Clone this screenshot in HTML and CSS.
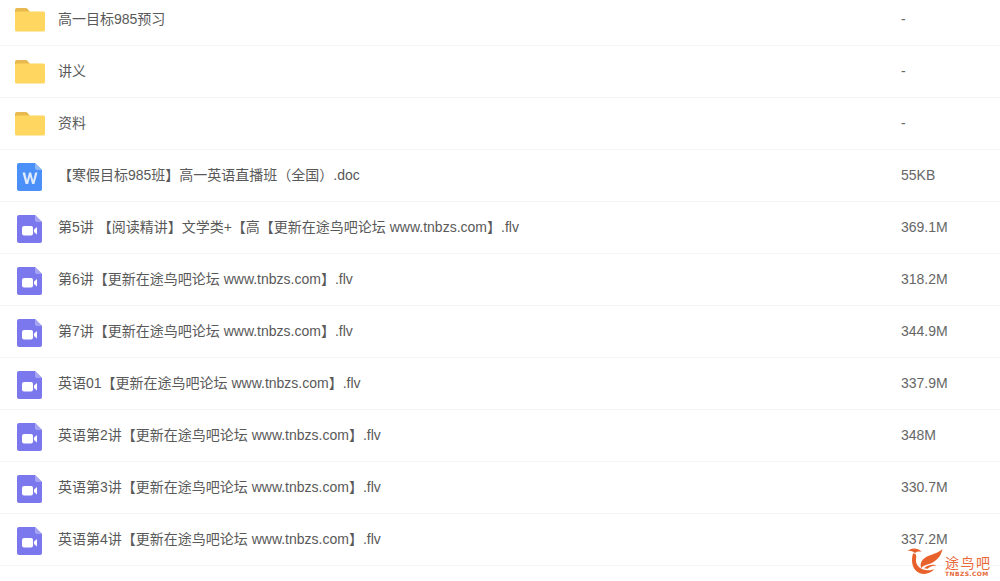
FILE: index.html
```html
<!DOCTYPE html>
<html lang="zh-CN">
<head>
  <meta charset="UTF-8">
  <title>文件列表</title>
  <link rel="stylesheet" href="styles.css">
</head>
<body>
  <svg class="defs" width="0" height="0">
    <defs>
      <symbol id="folder" viewBox="0 0 30 25">
        <path d="M0 3a2 2 0 0 1 2-2h8.500a3 3 0 0 1 2.200 1L15 5H2L0 7z" fill="#e8b94e"/>
        <path d="M0 6a1.500 1.500 0 0 1 1.500-1.500H28.500A1.500 1.500 0 0 1 30 6v17a1.500 1.500 0 0 1-1.500 1.500H1.500A1.500 1.500 0 0 1 0 23z" fill="#ffd65f"/>
      </symbol>
      <symbol id="word" viewBox="0 0 25 28">
        <path d="M2 0h16l7 7v19a2 2 0 0 1-2 2H2a2 2 0 0 1-2-2V2a2 2 0 0 1 2-2z" fill="#4a90f8"/>
        <path d="M18 0l7 7h-5a2 2 0 0 1-2-2z" fill="#8db9fb"/>
        <path d="M5.500 9.500h2.600l1.900 8 2.100-8h2l2.100 8 1.900-8h2.400l-3.100 11.500h-2.300l-2-7.500-2 7.500H8.600z" fill="#dfeafd"/>
      </symbol>
      <symbol id="video" viewBox="0 0 25 28">
        <path d="M2 0h16l7 7v19a2 2 0 0 1-2 2H2a2 2 0 0 1-2-2V2a2 2 0 0 1 2-2z" fill="#7b78ee"/>
        <path d="M18 0l7 7h-5a2 2 0 0 1-2-2z" fill="#a5a3f4"/>
        <rect x="5" y="11" width="11" height="9.500" rx="2" fill="#fff"/>
        <path d="M17 14.500l3-2.500v7.500l-3-2.500z" fill="#fff"/>
      </symbol>
    </defs>
  </svg>

  <div class="list">
    <div class="row">
      <svg class="icon folder"><use href="#folder"/></svg>
      <div class="name">高一目标985预习</div>
      <div class="size">-</div>
    </div>
    <div class="row">
      <svg class="icon folder"><use href="#folder"/></svg>
      <div class="name">讲义</div>
      <div class="size">-</div>
    </div>
    <div class="row">
      <svg class="icon folder"><use href="#folder"/></svg>
      <div class="name">资料</div>
      <div class="size">-</div>
    </div>
    <div class="row">
      <svg class="icon file"><use href="#word"/></svg>
      <div class="name">【寒假目标985班】高一英语直播班（全国）.doc</div>
      <div class="size">55KB</div>
    </div>
    <div class="row">
      <svg class="icon file"><use href="#video"/></svg>
      <div class="name">第5讲 【阅读精讲】文学类+【高【更新在途鸟吧论坛 www.tnbzs.com】.flv</div>
      <div class="size">369.1M</div>
    </div>
    <div class="row">
      <svg class="icon file"><use href="#video"/></svg>
      <div class="name">第6讲【更新在途鸟吧论坛 www.tnbzs.com】.flv</div>
      <div class="size">318.2M</div>
    </div>
    <div class="row">
      <svg class="icon file"><use href="#video"/></svg>
      <div class="name">第7讲【更新在途鸟吧论坛 www.tnbzs.com】.flv</div>
      <div class="size">344.9M</div>
    </div>
    <div class="row">
      <svg class="icon file"><use href="#video"/></svg>
      <div class="name">英语01【更新在途鸟吧论坛 www.tnbzs.com】.flv</div>
      <div class="size">337.9M</div>
    </div>
    <div class="row">
      <svg class="icon file"><use href="#video"/></svg>
      <div class="name">英语第2讲【更新在途鸟吧论坛 www.tnbzs.com】.flv</div>
      <div class="size">348M</div>
    </div>
    <div class="row">
      <svg class="icon file"><use href="#video"/></svg>
      <div class="name">英语第3讲【更新在途鸟吧论坛 www.tnbzs.com】.flv</div>
      <div class="size">330.7M</div>
    </div>
    <div class="row">
      <svg class="icon file"><use href="#video"/></svg>
      <div class="name">英语第4讲【更新在途鸟吧论坛 www.tnbzs.com】.flv</div>
      <div class="size">337.2M</div>
    </div>
  </div>

  <!-- watermark -->
  <div class="mark">
    <svg class="mark-logo" viewBox="0 0 120 90">
      <path d="M5 12C15 2 35 0 50 14C40 12 32 14 28 18C20 12 12 10 5 12z"/>
      <path d="M22 20C30 18 34 24 32 34C28 52 40 68 62 72C75 74 85 72 90 68C80 82 60 88 44 82C22 74 14 48 22 20z"/>
      <path d="M115 5C112 30 92 48 70 54C60 57 52 60 48 66C42 50 52 36 70 28C88 20 104 18 115 5z"/>
      <path d="M57 66C66 56 88 52 96 58C86 58 76 62 68 68z"/>
    </svg>
    <div class="mark-text">
      <div class="mark-cn">途鸟吧</div>
      <div class="mark-en">TNBZS.COM</div>
    </div>
  </div>
</body>
</html>
```

FILE: styles.css
```css
html, body {
  height: 100%;
}

body {
  margin: 0;
  background-color: #ffffff;
  font-family: "Liberation Sans", "Noto Sans CJK SC", sans-serif;
  font-size: 14px;
  color: #595959;
  overflow: hidden;
  position: relative;
}

.defs {
  display: block;
}

.list {
  margin-top: -6px;
}

.row {
  display: flex;
  align-items: center;
  height: 51px;
  border-bottom: 1px solid #f5f5f5;
  padding-left: 15px;
}

.icon {
  flex: none;
}

.icon.folder {
  width: 30px;
  height: 25px;
  margin-right: 13px;
}

.icon.file {
  width: 25px;
  height: 28px;
  margin-top: 3px;
  margin-left: 2px;
  margin-right: 16px;
}

.name {
  width: 843px;
  flex: none;
  white-space: nowrap;
  line-height: 20px;
  padding-bottom: 2px;
}

.size {
  color: #666666;
  line-height: 20px;
  padding-bottom: 2px;
}

.mark {
  position: absolute;
  left: 906px;
  top: 547px;
  display: flex;
  gap: 1px;
}

.mark-logo {
  width: 38px;
  height: 29px;
  fill: #e8602a;
}

.mark-text {
  padding-top: 9px;
  color: #e8683a;
}

.mark-cn {
  font-size: 14px;
  line-height: 15px;
  letter-spacing: 1.500px;
}

.mark-en {
  font-family: "DejaVu Sans", sans-serif;
  font-size: 6px;
  font-weight: bold;
  line-height: 6px;
  letter-spacing: 0.400px;
  white-space: nowrap;
}
```
